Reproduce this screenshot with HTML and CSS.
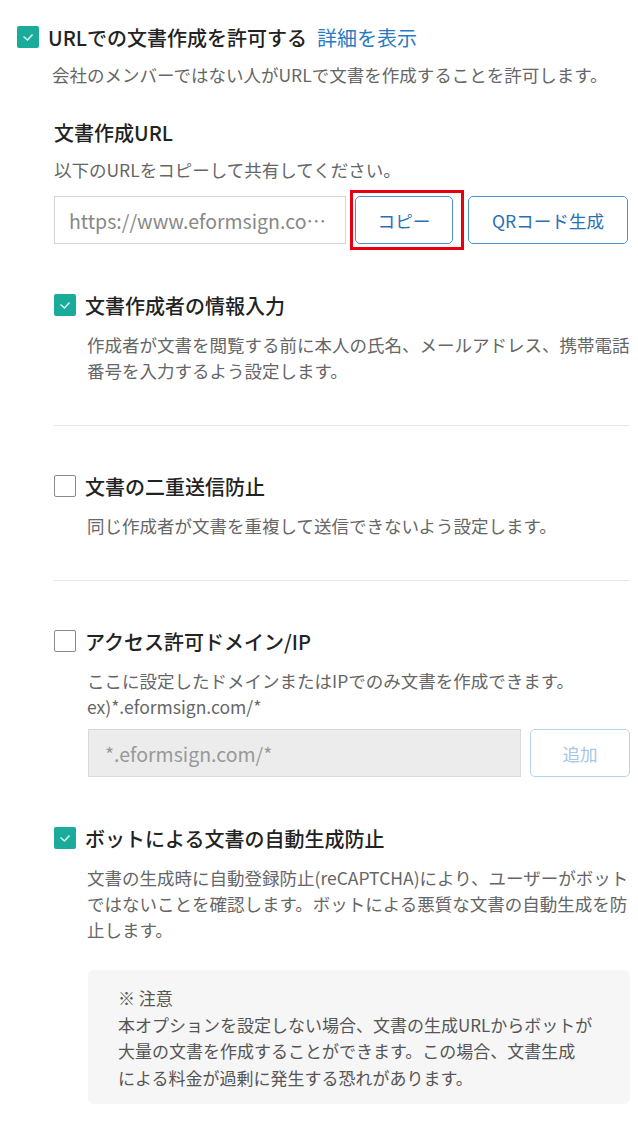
FILE: index.html
```html
<!DOCTYPE html>
<html lang="ja">
  <head>
    <meta charset="UTF-8" />
    <meta name="viewport" content="width=device-width, initial-scale=1.0" />
    <title>URLでの文書作成</title>
    <link rel="stylesheet" href="styles.css">
  </head>
  <body>
    <div class="page">
      <div class="option-head">
        <span class="checkbox checked">
          <svg viewBox="0 0 22 22" width="22" height="22"><polyline points="6.5,10.5 10.5,14 15.5,8.5" /></svg>
        </span>
        <span class="option-title">URLでの文書作成を許可する</span>
        <a href="#" class="detail-link">詳細を表示</a>
      </div>

      <div class="option-body">
        <p class="desc top-desc">会社のメンバーではない人がURLで文書を作成することを許可します。</p>

        <h3 class="sub-title">文書作成URL</h3>
        <p class="desc">以下のURLをコピーして共有してください。</p>

        <div class="url-row">
          <input type="text" class="url-input" value="https://www.eformsign.com/eform/document/external_user_view_service.html" readonly />
          <span class="highlight">
            <button class="btn copy-btn">コピー</button>
          </span>
          <button class="btn qr-btn">QRコード生成</button>
        </div>

        <!-- sub options -->
        <div class="sub-option first">
          <div class="option-head">
            <span class="checkbox checked">
              <svg viewBox="0 0 22 22" width="22" height="22"><polyline points="6.5,10.5 10.5,14 15.5,8.5" /></svg>
            </span>
            <span class="option-title">文書作成者の情報入力</span>
          </div>
          <p class="desc sub-desc">作成者が文書を閲覧する前に本人の氏名、メールアドレス、携帯電話番号を入力するよう設定します。</p>
        </div>

        <hr class="divider" />

        <div class="sub-option">
          <div class="option-head">
            <span class="checkbox"></span>
            <span class="option-title">文書の二重送信防止</span>
          </div>
          <p class="desc sub-desc">同じ作成者が文書を重複して送信できないよう設定します。</p>
        </div>

        <hr class="divider" />

        <div class="sub-option">
          <div class="option-head">
            <span class="checkbox"></span>
            <span class="option-title">アクセス許可ドメイン/IP</span>
          </div>
          <p class="desc sub-desc">ここに設定したドメインまたはIPでのみ文書を作成できます。<br />ex)*.eformsign.com/*</p>
          <div class="domain-row">
            <input type="text" class="domain-input" placeholder="*.eformsign.com/*" disabled />
            <button class="btn add-btn" disabled>追加</button>
          </div>
        </div>

        <div class="sub-option">
          <div class="option-head">
            <span class="checkbox checked">
              <svg viewBox="0 0 22 22" width="22" height="22"><polyline points="6.5,10.5 10.5,14 15.5,8.5" /></svg>
            </span>
            <span class="option-title">ボットによる文書の自動生成防止</span>
          </div>
          <p class="desc sub-desc">文書の生成時に自動登録防止(reCAPTCHA)により、ユーザーがボットではないことを確認します。ボットによる悪質な文書の自動生成を防止します。</p>
          <div class="notice">
            <p>※ 注意</p>
            <p>本オプションを設定しない場合、文書の生成URLからボットが<br />大量の文書を作成することができます。この場合、文書生成<br />による料金が過剰に発生する恐れがあります。</p>
          </div>
        </div>
      </div>
    </div>
  </body>
</html>
```

FILE: styles.css
```css
body {
  margin: 0;
  font-family: "Noto Sans CJK JP", "Noto Sans", sans-serif;
  background-color: #fff;
  color: #222;
}

p,
h3 {
  margin: 0;
}

.page {
  padding: 22px 6px 20px 17px;
}

.option-head {
  display: flex;
  align-items: center;
  gap: 9px;
  height: 30px;
}

.checkbox {
  flex: none;
  width: 22px;
  height: 22px;
  box-sizing: border-box;
  border: 1.5px solid #8a8a8a;
  border-radius: 2px;
  background-color: #fff;
}

.checkbox.checked {
  border: none;
  background-color: #1aab9b;
}

.checkbox svg {
  display: block;
}

.checkbox polyline {
  fill: none;
  stroke: #d9f3ef;
  stroke-width: 1.6;
}

.option-title {
  font-size: 20px;
  font-weight: 500;
  color: #222;
}

.detail-link {
  margin-left: 1px;
  font-size: 20px;
  color: #2a7bc2;
  text-decoration: none;
}

.option-body {
  padding-left: 37px;
}

.desc {
  font-size: 17.5px;
  line-height: 26px;
  color: #666;
}

.top-desc {
  margin-top: 10px;
  margin-left: -2px;
}

.sub-title {
  margin-top: 30px;
  margin-bottom: 9px;
  font-size: 20px;
  line-height: 30px;
  font-weight: 500;
  color: #222;
}

.url-row {
  display: flex;
  align-items: center;
  margin-top: 7px;
}

.url-input {
  width: 292px;
  height: 48px;
  box-sizing: border-box;
  padding: 0 6px 0 14px;
  border: 1px solid #d6d6d6;
  border-radius: 0;
  font-family: inherit;
  font-size: 19.5px;
  color: #888;
  background-color: #fff;
  text-overflow: ellipsis;
  outline: none;
}

.btn {
  height: 48px;
  box-sizing: border-box;
  border: 1px solid #4a90d2;
  border-radius: 5px;
  background-color: #fff;
  font-family: inherit;
  font-size: 17.6px;
  color: #2870b6;
  cursor: pointer;
}

.highlight {
  display: flex;
  margin: 0 4px;
  padding: 3px 8px 3px 2px;
  border: 3px solid #e60012;
}

.copy-btn {
  width: 98px;
}

.qr-btn {
  width: 160px;
}

.sub-option {
  margin-top: 46px;
}

.sub-option.first {
  margin-top: 40px;
}

.sub-desc {
  margin-top: 12px;
  padding-left: 33px;
}

.divider {
  margin: 41px 2px 0 0;
  border: none;
  border-top: 1px solid #e6e6e6;
}

.divider + .sub-option {
  margin-top: 45px;
}

.domain-row {
  display: flex;
  gap: 9px;
  margin-top: 9px;
  padding-left: 34px;
}

.domain-input {
  flex: 1;
  height: 48px;
  box-sizing: border-box;
  padding: 0 16px;
  border: 1px solid #d9d9d9;
  background-color: #ececec;
  font-family: inherit;
  font-size: 19.5px;
  color: #999;
}

.domain-input::placeholder {
  color: #999;
}

.add-btn {
  width: 100px;
  margin-right: 2px;
  border-color: #b6d4ee;
  color: #a5c8e8;
  cursor: default;
}

.notice {
  margin: 27px 2px 0 34px;
  padding: 15px 20px 13px 30px;
  border-radius: 6px;
  background-color: #f6f6f6;
  font-size: 17px;
  line-height: 26.5px;
  color: #555;
  white-space: nowrap;
}
```
